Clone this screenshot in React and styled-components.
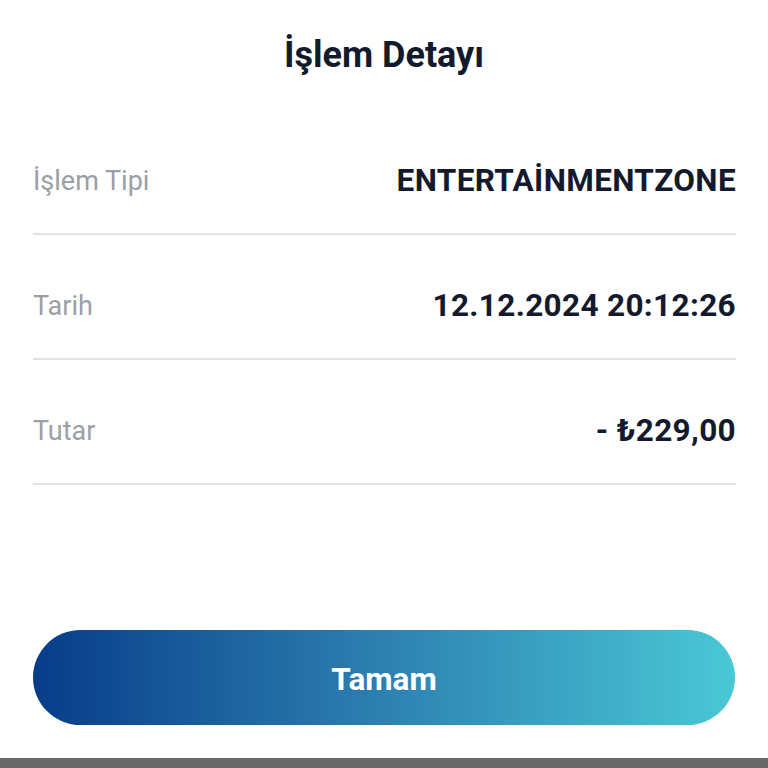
import React from 'react';
import styled, { createGlobalStyle } from 'styled-components';

const GlobalStyle = createGlobalStyle`
  html, body {
    margin: 0;
    padding: 0;
    background: #ffffff;
  }
  body {
    font-family: Roboto, "Noto Sans", "Liberation Sans", sans-serif;
  }
`;

const Screen = styled.div`
  width: 768px;
  height: 768px;
  display: flex;
  flex-direction: column;
  background: #ffffff;
  overflow: hidden;
`;

const Title = styled.h1`
  margin: 33px 0 0;
  height: 44px;
  line-height: 44px;
  text-align: center;
  font-size: 36px;
  font-weight: 700;
  color: #141a2e;
`;

const List = styled.div`
  margin: 33px 32px 0 33px;
  display: flex;
  flex-direction: column;
`;

const Row = styled.div`
  display: flex;
  justify-content: space-between;
  align-items: center;
  padding: 53px 0 34px;
  border-bottom: 2px solid #e1e2e4;
  line-height: 36px;
`;

const Label = styled.span`
  font-size: 27px;
  font-weight: 400;
  color: #9a9fa8;
`;

const Value = styled.span`
  font-size: 31.5px;
  font-weight: 700;
  letter-spacing: 0.35px;
  color: #141a2e;
`;

const Footer = styled.div`
  margin-top: auto;
  padding: 0 33px 33px;
`;

const Button = styled.button`
  width: 100%;
  height: 95px;
  padding: 3px 0 0;
  border: none;
  border-radius: 48px;
  background: linear-gradient(90deg, #073c89 0%, #2a7aad 45%, #4ac8d6 100%);
  color: #ffffff;
  font-family: inherit;
  font-size: 31.5px;
  font-weight: 700;
  cursor: pointer;
`;

const NavBar = styled.div`
  height: 10px;
  background: #686868;
`;

const rows = [
  { label: 'İşlem Tipi', value: 'ENTERTAİNMENTZONE' },
  { label: 'Tarih', value: '12.12.2024 20:12:26' },
  { label: 'Tutar', value: '- ₺229,00' },
];

export default function App() {
  return (
    <Screen>
      <GlobalStyle />
      <Title>İşlem Detayı</Title>
      <List>
        {rows.map(row => (
          <Row key={row.label}>
            <Label>{row.label}</Label>
            <Value>{row.value}</Value>
          </Row>
        ))}
      </List>
      <Footer>
        <Button>Tamam</Button>
      </Footer>
      <NavBar />
    </Screen>
  );
}
